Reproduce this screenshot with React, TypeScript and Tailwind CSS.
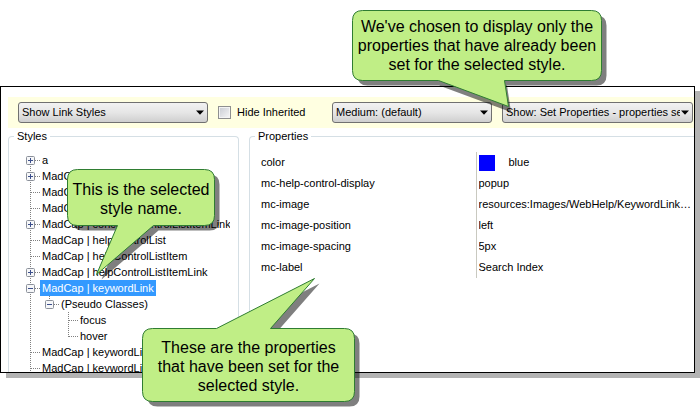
import React from "react";

type TreeItem = {
  label: string;
  depth: number;
  box?: "plus" | "minus";
  first?: boolean;
  last?: boolean;
  selected?: boolean;
};

const treeItems: TreeItem[] = [
  { label: "a", depth: 0, box: "plus", first: true },
  { label: "MadCap | conceptLink", depth: 0, box: "plus" },
  { label: "MadCap | conceptsControlList", depth: 0 },
  { label: "MadCap | conceptsControlListItem", depth: 0 },
  { label: "MadCap | conceptsControlListItemLink", depth: 0, box: "plus" },
  { label: "MadCap | helpControlList", depth: 0 },
  { label: "MadCap | helpControlListItem", depth: 0 },
  { label: "MadCap | helpControlListItemLink", depth: 0, box: "plus" },
  { label: "MadCap | keywordLink", depth: 0, box: "minus", selected: true },
  { label: "(Pseudo Classes)", depth: 1, box: "minus", last: true },
  { label: "focus", depth: 2 },
  { label: "hover", depth: 2, last: true },
  { label: "MadCap | keywordLinkControlList", depth: 0 },
  { label: "MadCap | keywordLinkControlListItem", depth: 0 },
];

const properties = [
  { name: "color", value: "blue", swatch: true },
  { name: "mc-help-control-display", value: "popup" },
  { name: "mc-image", value: "resources:Images/WebHelp/KeywordLinkIcon.gif" },
  { name: "mc-image-position", value: "left" },
  { name: "mc-image-spacing", value: "5px" },
  { name: "mc-label", value: "Search Index" },
];

function Connector({ item }: { item: TreeItem }) {
  return (
    <svg className="h-4 w-[14px] shrink-0" viewBox="0 0 14 16" fill="none" aria-hidden="true">
      <path
        d={`M4.5 ${item.first ? 8 : 0}V${item.last ? 9 : 16}M5 8.5H14`}
        stroke="#808080"
        strokeDasharray="1 1"
      />
      {item.box && (
        <>
          <rect x="0.5" y="4.5" width="8" height="8" rx="1" fill="#f6f7f9" stroke="#8b909a" />
          <path d={item.box === "plus" ? "M2 8.5H7M4.5 6V11" : "M2 8.5H7"} stroke="#3c4f8c" />
        </>
      )}
    </svg>
  );
}

function TreeRow({ item }: { item: TreeItem }) {
  return (
    <li className="flex h-4 items-center whitespace-nowrap">
      {item.depth > 0 && (
        <svg className="h-4 w-[19px] shrink-0" viewBox="0 0 19 16" aria-hidden="true">
          <path d="M4.5 0V16" stroke="#808080" strokeDasharray="1 1" />
        </svg>
      )}
      {item.depth > 1 && <span className="w-[19px] shrink-0" />}
      <Connector item={item} />
      <span className={item.selected ? "bg-[#3399ff] px-0.5 leading-4 text-white" : "px-0.5 leading-4"}>
        {item.label}
      </span>
    </li>
  );
}

function DropDown({ label, text, className }: { label: string; text: string; className: string }) {
  return (
    <div className={`relative ${className}`}>
      <select
        aria-label={label}
        className="block h-[21px] w-full appearance-none overflow-hidden rounded-[3px] border border-[#707070] bg-linear-to-b from-[#f2f2f2] via-[#e6e6e6] to-[#cfcfcf] pr-3 pl-[3px] text-black"
      >
        <option>{text}</option>
      </select>
      <svg className="pointer-events-none absolute top-2 right-1 h-[5px] w-2" viewBox="0 0 8 5" aria-hidden="true">
        <path d="M0 0.5H8L4 4.8Z" fill="#000" />
      </svg>
    </div>
  );
}

function Callout({
  className,
  size,
  path,
  shadow,
  children,
}: {
  className: string;
  size: string;
  path: string;
  shadow: string;
  children: React.ReactNode;
}) {
  return (
    <div className={`absolute flex justify-center text-center text-base leading-[19px] ${className}`}>
      <svg className={`absolute left-0 overflow-visible ${size}`} aria-hidden="true">
        <path d={shadow} transform="translate(5 5)" fill="#000" fillOpacity="0.5" />
        <path d={path} fill="#c0ee86" stroke="#2f7d32" strokeWidth="1" />
      </svg>
      <p className="relative whitespace-nowrap">{children}</p>
    </div>
  );
}

const topShape =
  "M10.5 0.5H239.5Q249.5 0.5 249.5 10.5V60.5Q249.5 70.5 239.5 70.5H152.5L156.5 96.5L86.5 70.5H10.5Q0.5 70.5 0.5 60.5V10.5Q0.5 0.5 10.5 0.5Z";
const topShadow =
  "M10.5 0.5H239.5Q249.5 0.5 249.5 10.5V60.5Q249.5 70.5 239.5 70.5H150L154 97L82 70.5H10.5Q0.5 70.5 0.5 60.5V10.5Q0.5 0.5 10.5 0.5Z";
const leftShape =
  "M10.5 0.5H137.5Q147.5 0.5 147.5 10.5V46.5Q147.5 56.5 137.5 56.5H86.5L29.5 105.5L50.5 56.5H10.5Q0.5 56.5 0.5 46.5V10.5Q0.5 0.5 10.5 0.5Z";
const bottomShape =
  "M10.5 0.5H74.5L172.5 -49.5L128.5 0.5H202.5Q212.5 0.5 212.5 10.5V63.5Q212.5 73.5 202.5 73.5H10.5Q0.5 73.5 0.5 63.5V10.5Q0.5 0.5 10.5 0.5Z";

export default function App() {
  return (
    <main className="relative overflow-hidden bg-white pt-[86px] pb-[44px] font-['Liberation_Sans',Arial,sans-serif] text-black">
      <section className="mr-[5px] overflow-hidden border border-black bg-white pt-2.5 pl-[7px] text-[11px] shadow-[6px_5px_0_#b3b3b3]">
        <div className="flex h-[31px] items-center bg-[#ffffe1] pr-px pl-2.5">
          <DropDown label="Styles to show" text="Show Link Styles" className="w-[190px]" />
          <label className="ml-2.5 flex items-center gap-1.5">
            <input
              type="checkbox"
              className="size-[13px] appearance-none border border-[#8e8f8f] bg-linear-to-br from-[#c8cbd2] to-[#f8f8f8] shadow-[inset_0_0_0_1px_#f4f4f4]"
            />
            Hide Inherited
          </label>
          <div className="ml-auto flex gap-2.5">
            <DropDown label="Medium" text="Medium: (default)" className="w-[160px]" />
            <DropDown label="Properties to show" text="Show: Set Properties - properties se" className="w-[191px]" />
          </div>
        </div>

        <div className="flex gap-2.5">
          <fieldset className="h-[244px] w-[231px] min-w-0 shrink-0 rounded-t border border-b-0 border-[#d5dfe5]">
            <legend className="ml-[5px] px-[3px] leading-4">Styles</legend>
            <ul className="mt-2 mr-2 ml-[17px] h-[220px] overflow-hidden">
              {treeItems.map((item) => (
                <TreeRow key={item.label} item={item} />
              ))}
            </ul>
          </fieldset>

          <fieldset className="h-[244px] min-w-0 grow rounded-tl border border-r-0 border-b-0 border-[#d5dfe5]">
            <legend className="ml-[5px] px-[3px] leading-4">Properties</legend>
            <table className="mt-2 ml-2 w-[calc(100%-10px)] table-fixed border-collapse">
              <tbody>
                {properties.map((p) => (
                  <tr key={p.name} className="h-[21px]">
                    <th scope="row" className="w-[218px] p-0 pl-[3px] text-left font-normal">
                      {p.name}
                    </th>
                    <td className="border-l border-[#c9c9c0] p-0 pl-0.5">
                      {p.swatch ? (
                        <span className="flex items-center gap-3.5">
                          <span className="size-4 bg-[#0000ff]" />
                          {p.value}
                        </span>
                      ) : (
                        <span className="block truncate">{p.value}</span>
                      )}
                    </td>
                  </tr>
                ))}
              </tbody>
            </table>
          </fieldset>
        </div>
      </section>

      <Callout
        className="top-[17px] right-[98px] w-[250px]"
        size="-top-[7px] h-[97px] w-[250px]"
        path={topShape}
        shadow={topShadow}
      >
        We've chosen to display only the
        <br />
        properties that have already been
        <br />
        set for the selected style.
      </Callout>
      <Callout
        className="top-[180px] left-[67px] w-[148px]"
        size="-top-[11px] h-[106px] w-[148px]"
        path={leftShape}
        shadow={leftShape}
      >
        This is the selected
        <br />
        style name.
      </Callout>
      <Callout
        className="top-[338px] left-[142px] w-[213px]"
        size="-top-[10px] h-[74px] w-[213px]"
        path={bottomShape}
        shadow={bottomShape}
      >
        These are the properties
        <br />
        that have been set for the
        <br />
        selected style.
      </Callout>
    </main>
  );
}
